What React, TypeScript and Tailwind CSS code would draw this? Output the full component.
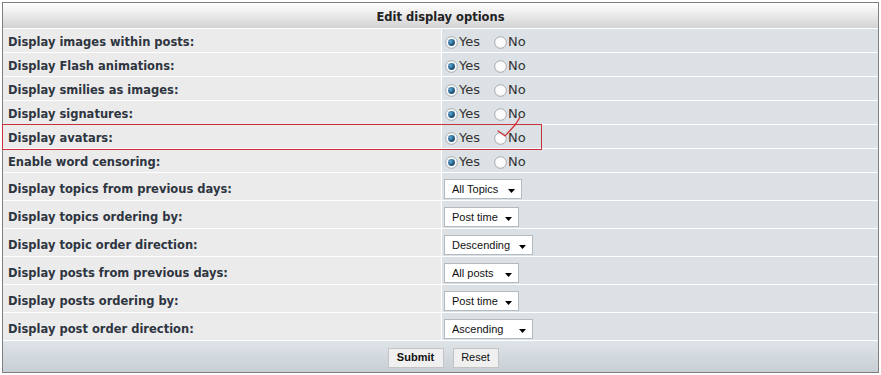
const radioRows = [
  'Display images within posts:',
  'Display Flash animations:',
  'Display smilies as images:',
  'Display signatures:',
  'Display avatars:',
  'Enable word censoring:',
];

const selectRows = [
  { label: 'Display topics from previous days:', value: 'All Topics', width: 'w-[78px]' },
  { label: 'Display topics ordering by:', value: 'Post time', width: 'w-[75px]' },
  { label: 'Display topic order direction:', value: 'Descending', width: 'w-[89px]' },
  { label: 'Display posts from previous days:', value: 'All posts', width: 'w-[75px]' },
  { label: 'Display posts ordering by:', value: 'Post time', width: 'w-[75px]' },
  { label: 'Display post order direction:', value: 'Ascending', width: 'w-[89px]' },
];

function Radio({ checked }: { checked: boolean }) {
  return (
    <svg width="13" height="13" viewBox="0 0 13 13" className="shrink-0">
      <defs>
        <radialGradient id="rb" cx="0.35" cy="0.35" r="0.7">
          <stop offset="0" stopColor="#5fa8d8" />
          <stop offset="1" stopColor="#0d3f66" />
        </radialGradient>
      </defs>
      <circle cx="6.5" cy="6.5" r="5.8" fill="#fbfbfb" stroke="#a3abb2" strokeWidth="1" />
      {checked && <circle cx="6.5" cy="6.5" r="3.4" fill="url(#rb)" />}
    </svg>
  );
}

function RadioPair() {
  return (
    <div className="flex items-center pl-px pt-[3px] text-[13px] text-[#333]">
      <Radio checked />
      <span className="ml-px">Yes</span>
      <span className="ml-[14px]">
        <Radio checked={false} />
      </span>
      <span className="ml-px">No</span>
    </div>
  );
}

function Select({ value, width }: { value: string; width: string }) {
  return (
    <div
      className={`${width} h-[20px] mt-[5px] flex items-center justify-between bg-white border border-[#b5babf] pl-[7px] pr-[6px] text-[11px] text-[#111] font-['Liberation_Sans',Arial,sans-serif]`}
    >
      <span>{value}</span>
      <svg width="7" height="4" viewBox="0 0 7 4" className="mt-[3px]">
        <path d="M0 0h7L3.5 4z" fill="#000" />
      </svg>
    </div>
  );
}

function Row({
  label,
  children,
  h,
  pt,
}: {
  label: string;
  children: React.ReactNode;
  h: string;
  pt: string;
}) {
  return (
    <div className={`grid grid-cols-[438px_1fr] gap-px ${h}`}>
      <div className={`bg-[#ebebeb] flex items-center pl-[5px] ${pt} text-[11.5px] font-bold text-[#2e3540]`}>
        {label}
      </div>
      <div className="bg-[#dce1e5] flex items-center pl-[2px]">{children}</div>
    </div>
  );
}

export default function App() {
  return (
    <div className="w-[881px] h-[375px] bg-white p-[2px] font-['DejaVu_Sans',Verdana,sans-serif]">
      <div className="border border-[#7f7f7f] bg-white flex flex-col gap-px h-[371px]">
        <div className="h-[25px] flex items-center justify-center pt-[4px] bg-gradient-to-b from-white to-[#d3d3d3] text-[11.5px] font-bold text-[#222]">
          Edit display options
        </div>
        {radioRows.map((label, i) => (
          <div key={label} className={i === 4 ? 'relative z-10' : 'relative'}>
            <Row label={label} h="h-[23px]" pt="pt-[4px]">
              <RadioPair />
            </Row>
            {i === 4 && (
              <>
                {/* red highlight drawn over the avatars row */}
                <div className="absolute left-[-1px] top-[-1px] w-[540px] h-[26px] border border-[#c9313b] pointer-events-none" />
                <svg
                  className="absolute left-[493px] top-[-8px] pointer-events-none"
                  width="28"
                  height="22"
                  viewBox="0 0 28 22"
                >
                  <path
                    d="M2 14 L9 19 L19 8 Q22 4 24 0"
                    fill="none"
                    stroke="#d0303a"
                    strokeWidth="1.3"
                    strokeLinecap="round"
                  />
                </svg>
              </>
            )}
          </div>
        ))}
        {selectRows.map((r) => (
          <Row key={r.label} label={r.label} h="h-[27px]" pt="pt-[6px]">
            <Select value={r.value} width={r.width} />
          </Row>
        ))}
        <div className="flex-1 flex items-center justify-center gap-[9px] pt-[2px] pl-[5px] bg-gradient-to-b from-[#dfe4e8] to-[#c7cfd5]">
          <button className="h-[20px] w-[56px] bg-[#f0f0f0] border border-[#c4c4c4] text-[11px] font-bold text-[#111] font-['Liberation_Sans',Arial,sans-serif]">
            Submit
          </button>
          <button className="h-[20px] w-[46px] bg-[#f0f0f0] border border-[#c4c4c4] text-[11px] text-[#111] font-['Liberation_Sans',Arial,sans-serif]">
            Reset
          </button>
        </div>
      </div>
    </div>
  );
}
